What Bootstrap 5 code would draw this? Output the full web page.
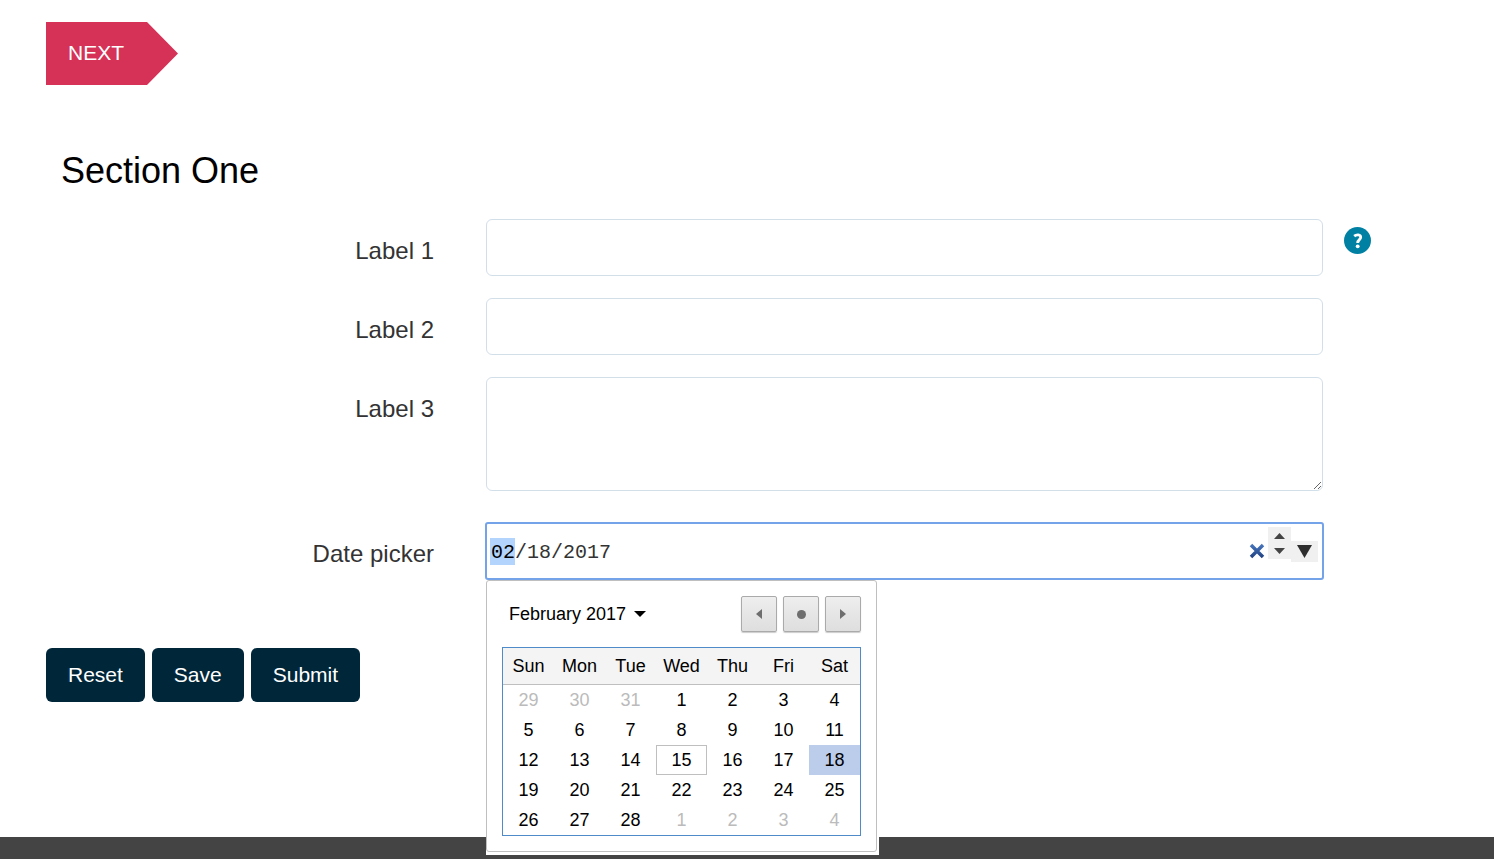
<!DOCTYPE html>
<html lang="en">
<head>
<meta charset="utf-8">
<meta name="viewport" content="width=device-width, initial-scale=1">
<title>Section One</title>
<link rel="stylesheet" href="https://cdn.jsdelivr.net/npm/bootstrap@5.3.0/dist/css/bootstrap.min.css">
<style>
body { font-family: "Liberation Sans", Arial, sans-serif; color: #333; background: #fff; }
.page-main { padding: 22px 46px 60px; }
.next-btn { width: 132px; height: 63px; padding: 0 0 2px 22px; border: 0; background: #d63157; color: #fff; font-size: 21px; text-align: left;
  clip-path: polygon(0 0, 101px 0, 100% 50%, 101px 100%, 0 100%); }
.section-title { margin: 64px 0 26px; padding-left: 15px; font-size: 36px; line-height: 44px; font-weight: 400; color: #000; }
.form-line { display: grid; grid-template-columns: 440fr 837fr 125fr; align-items: start; margin-bottom: 22px; }
.form-line label { padding: 16px 52px 0 0; text-align: right; font-size: 24px; line-height: 32px; }
.field { height: 57px; border: 1px solid #d3dfe8; border-radius: 6px; box-shadow: none; font-size: 20px; }
.field-area { height: 114px; resize: vertical; }
.help-btn { width: 27px; height: 27px; margin: 8px 0 0 21px; }
.date-line { margin: 31px 0 0; }
.date-box { height: 58px; margin: 0 -1px; padding-right: 4px; border: 2px solid #74a3ea; border-radius: 3px; background: #fff; }
.date-text { min-width: 0; height: 54px; padding: 2px 4px 0; border: 0; outline: 0; color: #333; font-family: "Liberation Mono", monospace; font-size: 20px; line-height: 27px;
  background: linear-gradient(#b3d4fd, #b3d4fd) 3px center / 25px 27px no-repeat; }
.date-text::selection { background: #b3d4fd; color: #000; }
.date-box button { padding: 0; border: 0; background: none; line-height: 0; }
.date-box .spin { margin: 3px 0 0 3px; background: #f0f0f0; }
.date-box .drop { background: #f0f0f0; }
.cal-wrap { position: absolute; top: 58px; left: 0; z-index: 10; padding: 0 2px 3px 0; background: #fff; }
.cal { padding: 15px; border: 1px solid #bfbfbf; border-radius: 3px; color: #000; font-size: 18px; }
.cal-head { margin-bottom: 15px; }
.cal-nav { gap: 6px; }
.month-btn { padding: 0 0 0 7px; border: 0; background: none; color: #000; }
.nav-btn { width: 36px; height: 36px; padding: 0; border: 1px solid #aaa; border-radius: 2px; background: linear-gradient(#eee, #dedede); box-shadow: 0 1px 1px #ccc; line-height: 0; }
.days { width: 359px; table-layout: fixed; border: 1px solid #4f8ac9; border-collapse: separate; border-spacing: 0; text-align: center; line-height: 28px; }
.days th { height: 37px; padding: 0; background: #f4f4f4; border-bottom: 1px solid #bfbfbf; font-weight: 400; }
.days td { height: 30px; padding: 0; border: 1px solid transparent; }
.days .off { color: #bbb; }
.days .today { border-color: #bfbfbf; }
.days .picked { background: #bccdec; border-color: #bccdec; }
.act-btn { height: 54px; padding: 0 22px; border: 0; border-radius: 6px; background: #00263a; color: #fff; font-size: 21px; }
.actions { gap: 7px; margin-top: 68px; }
.foot { height: 22px; background: #444; }
</style>
</head>
<body class="d-flex flex-column min-vh-100">
<main class="page-main flex-grow-1">
  <button type="button" class="next-btn d-block">NEXT</button>
  <form autocomplete="off">
    <h2 class="section-title">Section One</h2>
    <div class="form-line">
      <label for="f1">Label 1</label>
      <input id="f1" type="text" class="form-control field">
      <button type="button" class="help-btn btn p-0 border-0 lh-1" aria-label="Help">
        <svg class="d-block" width="27" height="27" viewBox="0 0 27 27" aria-hidden="true"><circle cx="13.500" cy="13.500" r="13.500" fill="#0081a3"/><path d="M10.200 9.200 C12.500 7.300 16.700 7.400 16.700 10.300 C16.700 12.800 13.700 12.500 13.700 16" fill="none" stroke="#fff" stroke-width="2.800"/><circle cx="13.700" cy="19.300" r="1.900" fill="#fff"/></svg>
      </button>
    </div>
    <div class="form-line">
      <label for="f2">Label 2</label>
      <input id="f2" type="text" class="form-control field">
    </div>
    <div class="form-line">
      <label for="f3">Label 3</label>
      <textarea id="f3" class="form-control field field-area"></textarea>
    </div>
    <div class="form-line date-line">
      <label for="f4">Date picker</label>
      <div class="position-relative">
        <div class="date-box d-flex align-items-center">
          <input id="f4" type="text" class="date-text flex-grow-1" value="02/18/2017">
          <button type="button" aria-label="Clear"><svg width="16" height="16" viewBox="0 0 16 16"><defs><linearGradient id="xg" x1="0" y1="0" x2="0" y2="16" gradientUnits="userSpaceOnUse"><stop offset="0" stop-color="#4b7cc4"/><stop offset="1" stop-color="#1d3c7c"/></linearGradient></defs><path d="M2 2 14 14M14 2 2 14" stroke="url(#xg)" stroke-width="3.500"/></svg></button>
          <div class="spin d-flex flex-column align-self-start">
            <button type="button" aria-label="Step up"><svg width="23" height="16" viewBox="0 0 23 16"><path d="M6 12 11.500 6 17 12Z" fill="#444"/></svg></button>
            <button type="button" aria-label="Step down"><svg width="23" height="16" viewBox="0 0 23 16"><path d="M6 5 17 5 11.500 11Z" fill="#444"/></svg></button>
          </div>
          <button type="button" class="drop" aria-label="Open calendar"><svg width="27" height="21" viewBox="0 0 27 21"><path d="M6 4H21L13.500 17Z" fill="#2e2e2e"/></svg></button>
        </div>
        <div class="cal-wrap">
          <div class="cal">
            <div class="cal-head d-flex align-items-center">
              <button type="button" class="month-btn me-auto d-flex align-items-center">February 2017<svg class="ms-2" width="12" height="6" viewBox="0 0 12 6"><path d="M0 0H12L6 6Z"/></svg></button>
              <div class="cal-nav d-flex">
                <button type="button" class="nav-btn" aria-label="Previous month"><svg width="34" height="34" viewBox="0 0 34 34"><path d="M20 12V22L14 17Z" fill="#6e6e6e"/></svg></button>
                <button type="button" class="nav-btn" aria-label="Today"><svg width="34" height="34" viewBox="0 0 34 34"><circle cx="17.500" cy="17.500" r="4.500" fill="#6e6e6e"/></svg></button>
                <button type="button" class="nav-btn" aria-label="Next month"><svg width="34" height="34" viewBox="0 0 34 34"><path d="M14 12V22L20 17Z" fill="#6e6e6e"/></svg></button>
              </div>
            </div>
            <table class="days">
              <thead><tr><th>Sun</th><th>Mon</th><th>Tue</th><th>Wed</th><th>Thu</th><th>Fri</th><th>Sat</th></tr></thead>
              <tbody>
                <tr><td class="off">29</td><td class="off">30</td><td class="off">31</td><td>1</td><td>2</td><td>3</td><td>4</td></tr>
                <tr><td>5</td><td>6</td><td>7</td><td>8</td><td>9</td><td>10</td><td>11</td></tr>
                <tr><td>12</td><td>13</td><td>14</td><td class="today">15</td><td>16</td><td>17</td><td class="picked">18</td></tr>
                <tr><td>19</td><td>20</td><td>21</td><td>22</td><td>23</td><td>24</td><td>25</td></tr>
                <tr><td>26</td><td>27</td><td>28</td><td class="off">1</td><td class="off">2</td><td class="off">3</td><td class="off">4</td></tr>
              </tbody>
            </table>
          </div>
        </div>
      </div>
    </div>
    <div class="actions d-flex">
      <button type="button" class="act-btn">Reset</button>
      <button type="button" class="act-btn">Save</button>
      <button type="button" class="act-btn">Submit</button>
    </div>
  </form>
</main>
<footer class="foot"></footer>
<script src="https://cdn.jsdelivr.net/npm/bootstrap@5.3.0/dist/js/bootstrap.bundle.min.js"></script>
<script>
const dateText = document.getElementById('f4');
dateText.focus({ preventScroll: true });
dateText.setSelectionRange(0, 2);
</script>
</body>
</html>
